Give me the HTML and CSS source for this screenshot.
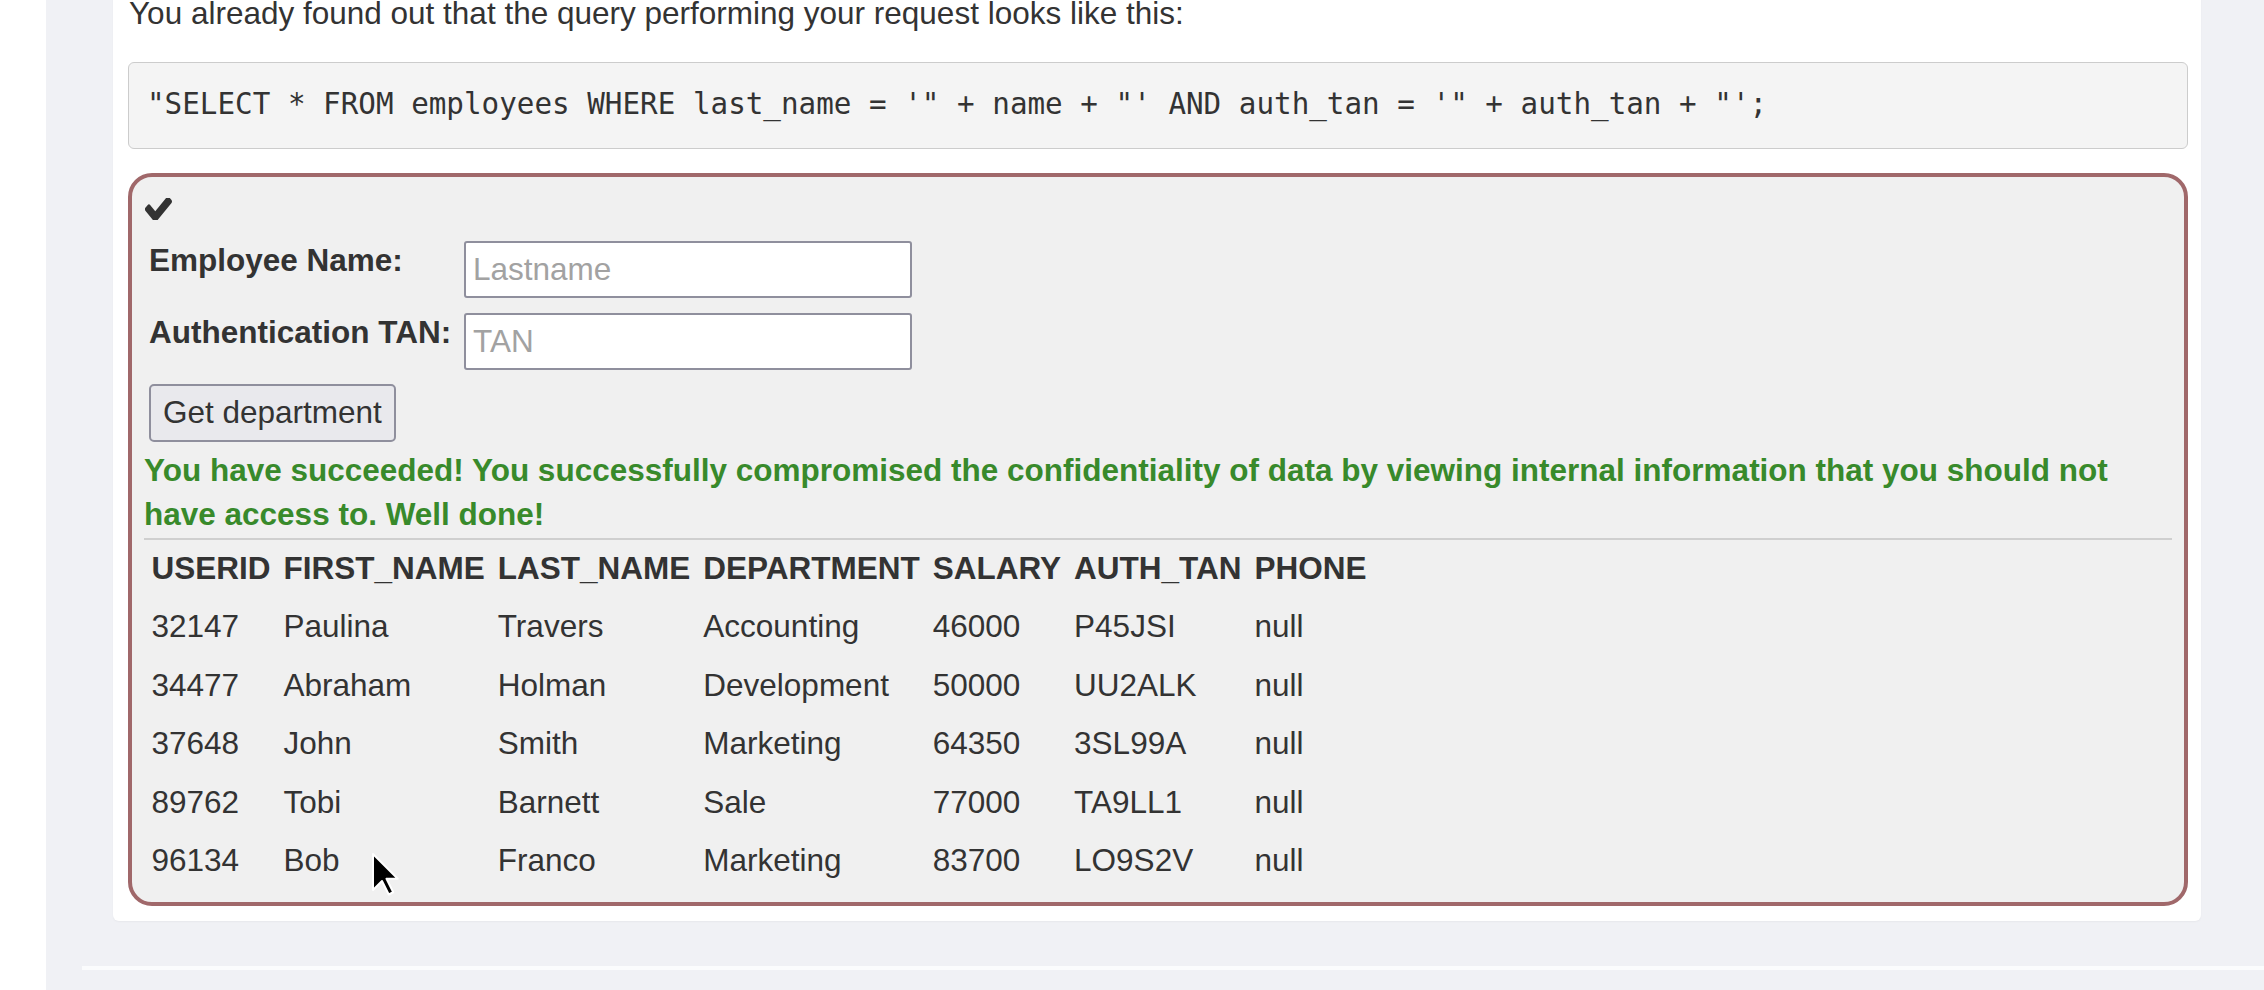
FILE: index.html
```html
<!DOCTYPE html>
<html lang="en">
<head>
<meta charset="utf-8">
<title>SQL Injection</title>
<link rel="stylesheet" href="styles.css">
</head>
<body>
<div class="layout">
  <aside class="sidebar"></aside>
  <div class="main">
    <div class="content">
      <div class="card">
        <p class="intro">You already found out that the query performing your request looks like this:</p>
        <pre class="code">"SELECT * FROM employees WHERE last_name = '" + name + "' AND auth_tan = '" + auth_tan + "';</pre>
        <div class="attack-container">
          <div class="assignment-success">
            <svg class="check" width="27" height="22" viewBox="128 402 1543 1024" preserveAspectRatio="none" aria-hidden="true"><path d="M1671 566q0 40-28 68l-724 724-136 136q-28 28-68 28t-68-28l-136-136-362-362q-28-28-28-68t28-68l136-136q28-28 68-28t68 28l294 295 656-657q28-28 68-28t68 28l136 136q28 28 28 68z" fill="#333"/></svg>
          </div>
          <form class="attack-form">
            <label class="form-label">Employee Name:</label>
            <input class="form-input" type="text" placeholder="Lastname">
            <label class="form-label">Authentication TAN:</label>
            <input class="form-input" type="text" placeholder="TAN">
            <button class="form-button" type="button">Get department</button>
          </form>
          <div class="attack-feedback">You have succeeded! You successfully compromised the confidentiality of data by viewing internal information that you should not have access to. Well done!</div>
          <div class="attack-output">
            <hr class="divider">
            <table class="result">
              <tr><th>USERID</th><th>FIRST_NAME</th><th>LAST_NAME</th><th>DEPARTMENT</th><th>SALARY</th><th>AUTH_TAN</th><th>PHONE</th></tr>
              <tr><td>32147</td><td>Paulina</td><td>Travers</td><td>Accounting</td><td>46000</td><td>P45JSI</td><td>null</td></tr>
              <tr><td>34477</td><td>Abraham</td><td>Holman</td><td>Development</td><td>50000</td><td>UU2ALK</td><td>null</td></tr>
              <tr><td>37648</td><td>John</td><td>Smith</td><td>Marketing</td><td>64350</td><td>3SL99A</td><td>null</td></tr>
              <tr><td>89762</td><td>Tobi</td><td>Barnett</td><td>Sale</td><td>77000</td><td>TA9LL1</td><td>null</td></tr>
              <tr><td>96134</td><td>Bob</td><td>Franco</td><td>Marketing</td><td>83700</td><td>LO9S2V</td><td>null</td></tr>
            </table>
          </div>
        </div>
      </div>
    </div>
    <div class="footer"></div>
  </div>
</div>
<svg class="cursor" width="30" height="46" viewBox="-2 -2 30 46" aria-hidden="true"><polygon points="0,0 0,36 9,27 15.75,40.5 20.25,38.25 13.5,24.75 24.75,24.75" fill="#000" stroke="#fff" stroke-width="2" stroke-linejoin="round"/></svg>
</body>
</html>
```

FILE: styles.css
```css
html, body {
  margin: 0;
  padding: 0;
  height: 100%;
  overflow: hidden;
}

body {
  background: #f0f1f5;
  font-family: "Liberation Sans", Arial, Helvetica, sans-serif;
  font-size: 31.5px;
  line-height: 44.3px;
  color: #333;
}

.layout {
  display: flex;
  min-height: 100%;
}

.sidebar {
  width: 46px;
  flex: 0 0 46px;
  background: #ffffff;
}

.main {
  flex: 1;
  display: flex;
  flex-direction: column;
}

.content {
  padding: 0 63px 0 67px;
}

.card {
  background: #ffffff;
  padding: 0 13px 15px 15px;
  border-radius: 0 0 6px 6px;
  box-shadow: 0 1px 2px rgba(0, 0, 0, 0.04);
}

.intro {
  margin: -9px 0 26.7px 0;
  padding-left: 1px;
}

.code {
  margin: 0 0 24px 0;
  padding: 21.4px 18px;
  background: #f4f4f4;
  border: 1px solid #cccccc;
  border-radius: 6px;
  font-family: "DejaVu Sans Mono", monospace;
  font-size: 29.25px;
  line-height: 1.42857;
  color: #333;
  white-space: pre;
  overflow: hidden;
}

.attack-container {
  border: 4px solid #a0686a;
  border-radius: 24px;
  background: #f0f0f0;
  padding: 0 12px 11px 12px;
}

.assignment-success {
  padding-top: 21px;
  padding-left: 1px;
  height: 22px;
}

.check {
  display: block;
}

.attack-form {
  margin: 21px 0 0 5px;
  display: grid;
  grid-template-columns: 315px 448px;
  grid-auto-rows: 57px;
  row-gap: 15px;
  align-items: start;
}

.form-label {
  font-weight: bold;
  margin-top: -3px;
}

.form-input {
  box-sizing: border-box;
  width: 448px;
  height: 57px;
  margin: 0;
  padding: 0 7px;
  border: 2px solid #8f8f9d;
  border-radius: 3px;
  background: #ffffff;
  font-family: "Liberation Sans", Arial, sans-serif;
  font-size: 31.5px;
  color: #333;
  outline: none;
}

.form-input::placeholder {
  color: #a2a2a2;
}

.form-button {
  grid-column: 1 / 2;
  justify-self: start;
  box-sizing: border-box;
  height: 58px;
  margin-top: -1px;
  padding: 0 12px;
  border: 2px solid #8f8f9d;
  border-radius: 5px;
  background: #e9e9ed;
  font-family: "Liberation Sans", Arial, sans-serif;
  font-size: 31.5px;
  color: #333;
}

.attack-feedback {
  margin-top: 6px;
  font-weight: bold;
  color: #388a2b;
}

.divider {
  margin: 2.3px 0 0 0;
  border: 0;
  border-top: 2px solid #cfcfcf;
  height: 0;
}

.result {
  border-collapse: separate;
  border-spacing: 0;
  margin-left: 1px;
}

.result th,
.result td {
  padding: 5.5px 6.5px 8.7px 6.5px;
  text-align: left;
  vertical-align: top;
  white-space: nowrap;
}

.result th {
  font-weight: bold;
}

.footer {
  margin-top: 45px;
  margin-left: 36px;
  border-top: 4px solid #fbfcfd;
  flex: 1;
}

.cursor {
  position: absolute;
  left: 371px;
  top: 852px;
}
```
